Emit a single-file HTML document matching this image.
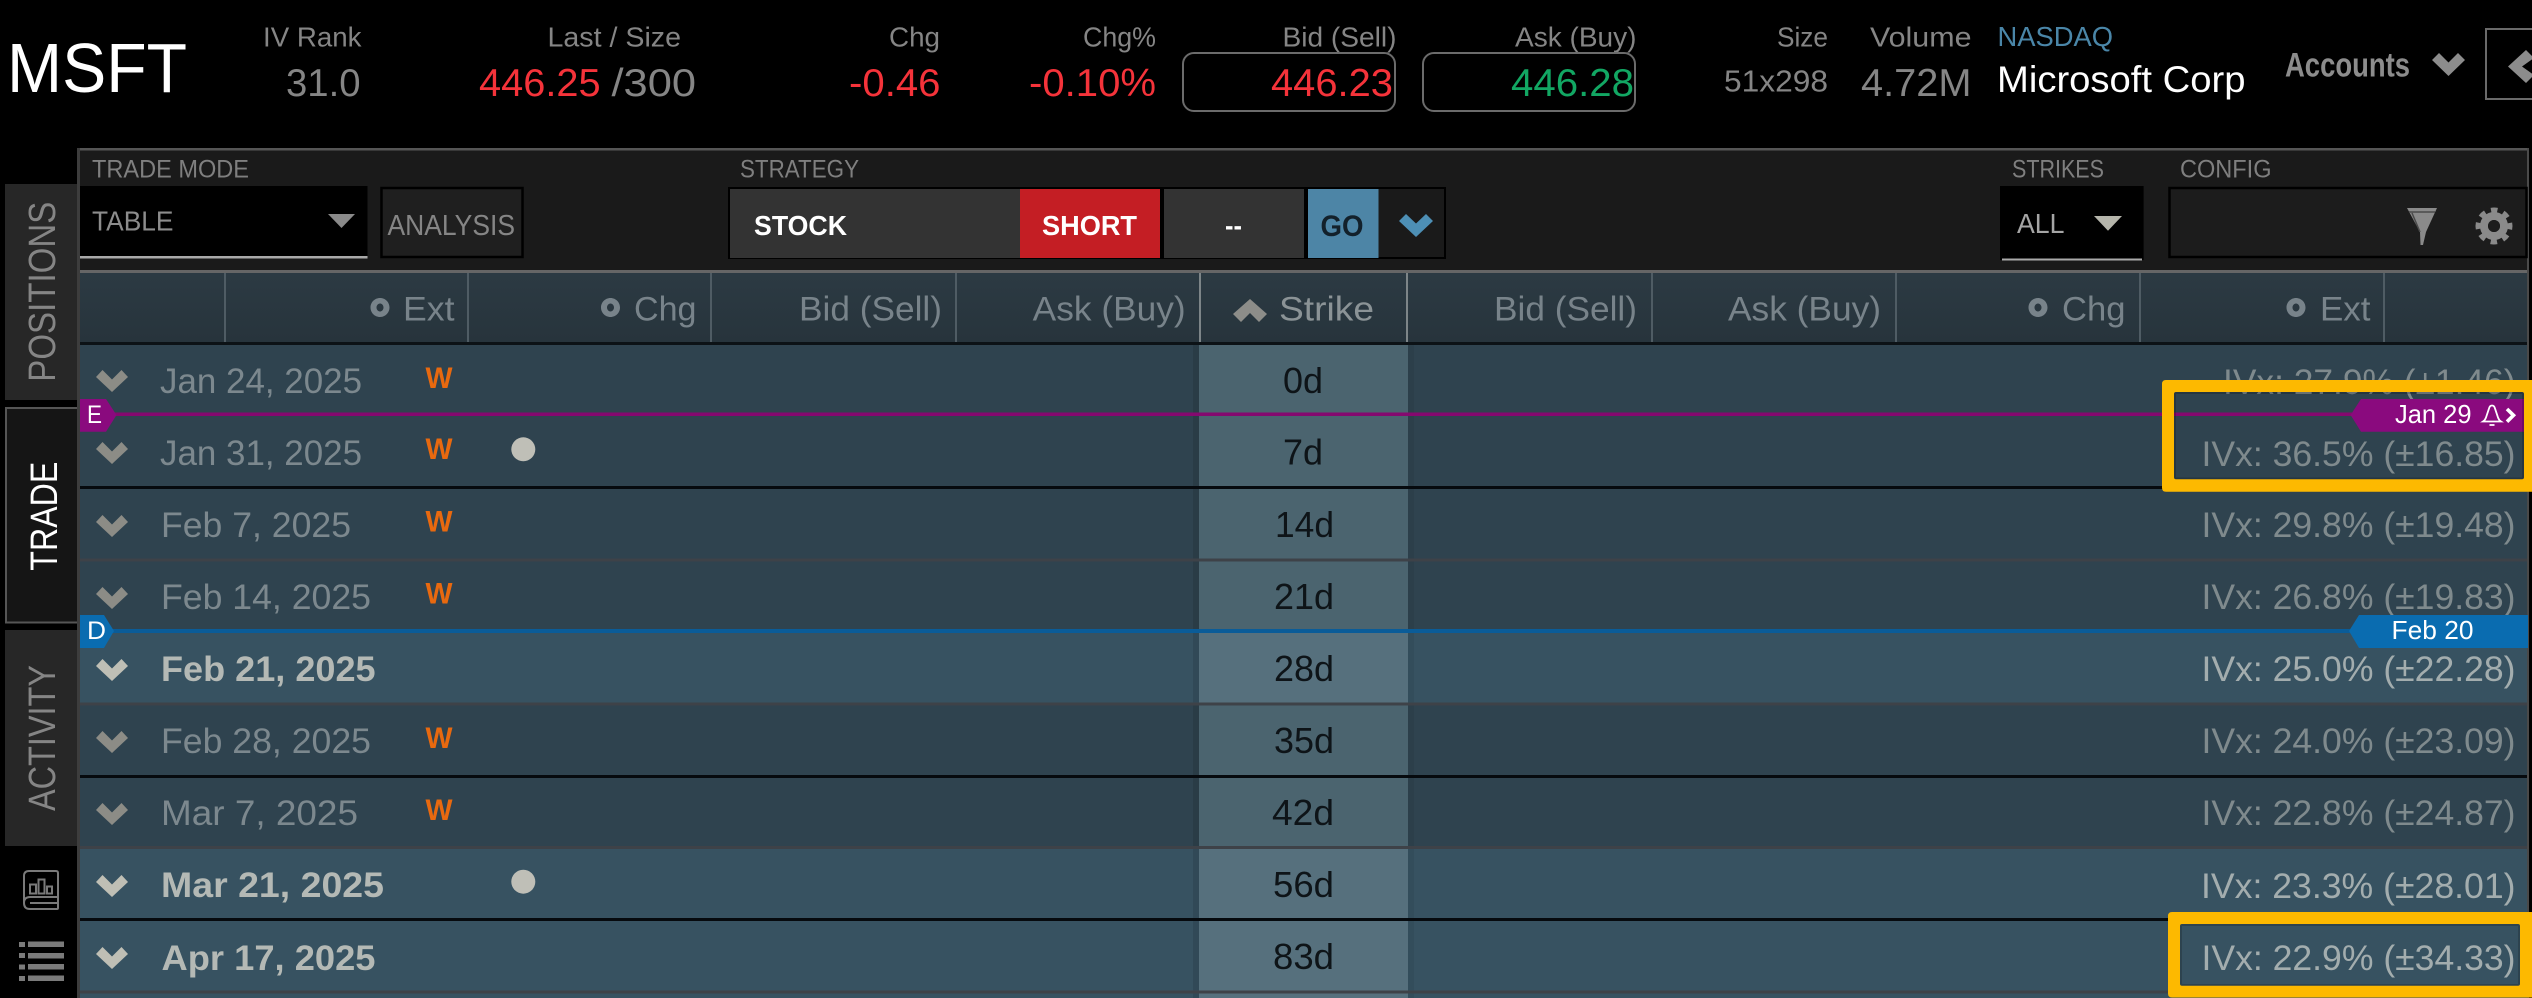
<!DOCTYPE html>
<html lang="en">
<head>
<meta charset="utf-8">
<title>MSFT Trade</title>
<style>
html,body{margin:0;padding:0;background:#000;width:2532px;height:998px;overflow:hidden}
svg{display:block}
text{font-family:"Liberation Sans",sans-serif}
.lb{font-size:28px;fill:#858585}
.val{font-size:39px;fill:#858585}
.red{font-size:39px;fill:#f5333a}
.tb{font-size:25px;fill:#7f7f7f}
.btn{font-size:28px;font-weight:bold;fill:#fff}
.hd{font-size:34px;fill:#78838a}
.dt{font-size:35px;fill:#7c888e}
.db{font-size:35px;font-weight:bold;fill:#b4b9b5}
.w{font-size:30px;font-weight:bold;fill:#e8690f}
.iv{font-size:35px;fill:#7f8a8d}
.ib{font-size:35px;fill:#a3adae}
.d{font-size:36px;fill:#0e1418}
.tag{font-size:26px;fill:#fff}
.tab{font-size:38px;fill:#858585}
</style>
</head>
<body>
<svg xmlns="http://www.w3.org/2000/svg" width="2532" height="998" viewBox="0 0 2532 998">
<defs>
<linearGradient id="hg" x1="0" y1="0" x2="0" y2="1"><stop offset="0" stop-color="#2c3a43"/><stop offset="1" stop-color="#27343c"/></linearGradient>
<path id="cv" d="M96 378 L102.500 371 L112 380.500 L121.500 371 L128 378 L112 393 Z"/>
<path id="ring" fill-rule="evenodd" d="M0 -9.500 C5.500 -9.500 9.500 -5 9.500 0 C9.500 5 5.500 9.500 0 9.500 C-5.500 9.500 -9.500 5 -9.500 0 C-9.500 -5 -5.500 -9.500 0 -9.500 Z M0 -4 C-2 -4 -3.500 -2 -3.500 0 C-3.500 2 -2 4 0 4 C2 4 3.500 2 3.500 0 C3.500 -2 2 -4 0 -4 Z"/>
</defs>
<rect width="2532" height="998" fill="#000"/>

<!-- top quote bar -->
<text x="7" y="92" font-size="70" fill="#fff" textLength="180" lengthAdjust="spacingAndGlyphs">MSFT</text>
<text class="lb" x="263" y="46.700" textLength="98.500" lengthAdjust="spacingAndGlyphs">IV Rank</text>
<text class="val" x="286" y="96" textLength="74.500" lengthAdjust="spacingAndGlyphs">31.0</text>
<text class="lb" x="547.500" y="46.700" textLength="133.500" lengthAdjust="spacingAndGlyphs">Last / Size</text>
<text class="red" x="479" y="96" textLength="121.600" lengthAdjust="spacingAndGlyphs">446.25</text>
<text class="val" x="611.500" y="96" textLength="84.500" lengthAdjust="spacingAndGlyphs">/300</text>
<text class="lb" x="889" y="46.700" textLength="51" lengthAdjust="spacingAndGlyphs">Chg</text>
<text class="red" x="849" y="96" textLength="91.500" lengthAdjust="spacingAndGlyphs">-0.46</text>
<text class="lb" x="1083" y="46.700" textLength="73" lengthAdjust="spacingAndGlyphs">Chg%</text>
<text class="red" x="1029" y="96" textLength="127" lengthAdjust="spacingAndGlyphs">-0.10%</text>
<text class="lb" x="1282.500" y="46.700" textLength="114" lengthAdjust="spacingAndGlyphs">Bid (Sell)</text>
<rect x="1183" y="53" width="212" height="58" rx="11" fill="#000" stroke="#6b6b6b" stroke-width="2"/>
<text class="red" x="1271" y="96" textLength="122" lengthAdjust="spacingAndGlyphs">446.23</text>
<text class="lb" x="1515" y="46.700" textLength="121.500" lengthAdjust="spacingAndGlyphs">Ask (Buy)</text>
<rect x="1423" y="53" width="212" height="58" rx="11" fill="#000" stroke="#6b6b6b" stroke-width="2"/>
<text x="1511" y="96" font-size="39" fill="#12a763" textLength="123" lengthAdjust="spacingAndGlyphs">446.28</text>
<text class="lb" x="1777" y="46.700" textLength="51" lengthAdjust="spacingAndGlyphs">Size</text>
<text x="1724" y="91.700" font-size="31" fill="#858585" textLength="104" lengthAdjust="spacingAndGlyphs">51x298</text>
<text class="lb" x="1870" y="46.700" textLength="101.500" lengthAdjust="spacingAndGlyphs">Volume</text>
<text class="val" x="1861" y="96" textLength="110.500" lengthAdjust="spacingAndGlyphs">4.72M</text>
<text x="1997.500" y="46" font-size="28" fill="#4a86a8" textLength="115.500" lengthAdjust="spacingAndGlyphs">NASDAQ</text>
<text x="1997" y="92" font-size="37" fill="#fff" textLength="248.500" lengthAdjust="spacingAndGlyphs">Microsoft Corp</text>
<text x="2285" y="76.700" font-size="34" font-weight="bold" fill="#8c8c8c" textLength="125" lengthAdjust="spacingAndGlyphs">Accounts</text>
<path d="M2432 60 L2439 53 L2448.500 62.500 L2458 53 L2465 60 L2448.500 76 Z" fill="#8c8c8c"/>
<rect x="2486" y="29" width="60" height="70" fill="none" stroke="#6a6a6a" stroke-width="2"/>
<path d="M2508 66.500 L2526 50 L2534 58 L2522 66.500 L2534 75 L2526 83 Z" fill="#8c8c8c"/>

<!-- panel + toolbar -->
<rect x="77" y="148" width="2452" height="850" fill="#1a1a1a"/>
<rect x="77" y="148" width="2452" height="2.500" fill="#555"/>
<rect x="77" y="148" width="3" height="850" fill="#3d3d3d"/>
<rect x="2527" y="148" width="2" height="850" fill="#4a4a4a"/>

<text class="tb" x="92" y="177.700" textLength="157" lengthAdjust="spacingAndGlyphs">TRADE MODE</text>
<rect x="80" y="186" width="287.500" height="72" fill="#000"/>
<rect x="80" y="256" width="287.500" height="2.500" fill="#a9a9a9"/>
<text x="92" y="230.700" font-size="28" fill="#8c8c8c" textLength="81.500" lengthAdjust="spacingAndGlyphs">TABLE</text>
<path d="M328 214 H355 L341.500 228 Z" fill="#8a8a8a"/>
<rect x="381.500" y="188" width="141" height="69" fill="#1f1f1f" stroke="#000" stroke-width="2.500"/>
<text x="387.500" y="235" font-size="29" fill="#858585" textLength="127.500" lengthAdjust="spacingAndGlyphs">ANALYSIS</text>

<text class="tb" x="740" y="177.700" textLength="119" lengthAdjust="spacingAndGlyphs">STRATEGY</text>
<rect x="728" y="187" width="718" height="72" fill="#000"/>
<rect x="730" y="189" width="290" height="69" fill="#333"/>
<text class="btn" x="754" y="235" textLength="93" lengthAdjust="spacingAndGlyphs">STOCK</text>
<rect x="1020" y="189" width="140" height="69" fill="#c41e24"/>
<text class="btn" x="1042" y="235" textLength="95" lengthAdjust="spacingAndGlyphs">SHORT</text>
<rect x="1164" y="189" width="140" height="69" fill="#333"/>
<text class="btn" x="1225" y="235" textLength="17" lengthAdjust="spacingAndGlyphs">--</text>
<rect x="1308" y="189" width="70.500" height="69" fill="#4d85a6"/>
<text class="btn" style="fill:#13212b;font-size:30px" x="1320.500" y="236" textLength="43" lengthAdjust="spacingAndGlyphs">GO</text>
<rect x="1378.500" y="189" width="65.500" height="68" fill="#1a1a1a"/>
<path d="M1399 221 L1406 214 L1416 223.500 L1426 214 L1433 221 L1416 237 Z" fill="#4d8fb5"/>

<text class="tb" x="2012" y="177.700" textLength="92" lengthAdjust="spacingAndGlyphs">STRIKES</text>
<rect x="2000" y="186" width="143.600" height="74" fill="#000"/>
<rect x="2002" y="258.500" width="140" height="2" fill="#a9a9a9"/>
<text x="2017" y="233" font-size="28" fill="#a5a5a5" textLength="47.500" lengthAdjust="spacingAndGlyphs">ALL</text>
<path d="M2094 216 H2122 L2108 230.700 Z" fill="#b5b5ab"/>
<text class="tb" x="2180" y="177.700" textLength="91.500" lengthAdjust="spacingAndGlyphs">CONFIG</text>
<rect x="2169.500" y="188" width="357" height="69" fill="#1c1c1c" stroke="#000" stroke-width="2.500"/>
<path d="M2407 208 H2437 L2426 232 L2423 245 H2420.500 L2420 232 Z" fill="#8a8a8a"/>
<path d="M2409 212 H2435 M2412 213 L2420 232" stroke="#4a4a4a" stroke-width="1.500" fill="none"/>
<circle cx="2494" cy="226" r="15.500" fill="none" stroke="#8a8a8a" stroke-width="6" stroke-dasharray="6.200 5.970" transform="rotate(-11 2494 226)"/>
<circle cx="2494" cy="226" r="10" fill="none" stroke="#8a8a8a" stroke-width="8"/>
<circle cx="2494" cy="226" r="6" fill="#1c1c1c"/>

<!-- column header -->
<rect x="80" y="270" width="2447" height="3" fill="#666"/>
<rect x="80" y="273" width="2447" height="69" fill="url(#hg)"/>
<rect x="80" y="342" width="2447" height="3" fill="#0c1216"/>
<g fill="#4f5c64">
<rect x="224" y="273" width="2" height="69"/><rect x="467" y="273" width="2" height="69"/><rect x="710" y="273" width="2" height="69"/><rect x="955" y="273" width="2" height="69"/><rect x="1651" y="273" width="2" height="69"/><rect x="1895" y="273" width="2" height="69"/><rect x="2139" y="273" width="2" height="69"/><rect x="2383" y="273" width="2" height="69"/>
</g>
<rect x="1199" y="273" width="2" height="69" fill="#7d8588"/>
<rect x="1406" y="273" width="2" height="69" fill="#7d8588"/>
<g fill="#78838a">
<use href="#ring" x="380" y="307.500"/>
<use href="#ring" x="610.500" y="307.500"/>
<use href="#ring" x="2038" y="307.500"/>
<use href="#ring" x="2296" y="307.500"/>
</g>
<text class="hd" x="403" y="320.700" textLength="51.500" lengthAdjust="spacingAndGlyphs">Ext</text>
<text class="hd" x="634" y="320.700" textLength="62.500" lengthAdjust="spacingAndGlyphs">Chg</text>
<text class="hd" x="799" y="320.700" textLength="143" lengthAdjust="spacingAndGlyphs">Bid (Sell)</text>
<text class="hd" x="1032.700" y="320.700" textLength="153" lengthAdjust="spacingAndGlyphs">Ask (Buy)</text>
<path d="M1233 314 L1250 299 L1267 314 L1259 322 L1250 313 L1241 322 Z" fill="#8d8d89"/>
<text class="hd" style="fill:#8b9396" x="1279" y="320.700" textLength="95" lengthAdjust="spacingAndGlyphs">Strike</text>
<text class="hd" x="1494" y="320.700" textLength="143" lengthAdjust="spacingAndGlyphs">Bid (Sell)</text>
<text class="hd" x="1728" y="320.700" textLength="153" lengthAdjust="spacingAndGlyphs">Ask (Buy)</text>
<text class="hd" x="2062" y="320.700" textLength="63.500" lengthAdjust="spacingAndGlyphs">Chg</text>
<text class="hd" x="2320" y="320.700" textLength="50.500" lengthAdjust="spacingAndGlyphs">Ext</text>

<!-- rows -->
<rect x="80" y="345" width="2447" height="287" fill="#2f434f"/>
<rect x="80" y="632" width="2447" height="72" fill="#375261"/>
<rect x="80" y="704" width="2447" height="144" fill="#2f434f"/>
<rect x="80" y="848" width="2447" height="150" fill="#375261"/>
<rect x="1199" y="345" width="209" height="287" fill="#4b646f"/>
<rect x="1199" y="632" width="209" height="72" fill="#56707d"/>
<rect x="1199" y="704" width="209" height="144" fill="#4b646f"/>
<rect x="1199" y="848" width="209" height="150" fill="#56707d"/>
<rect x="1193" y="345" width="6" height="653" fill="#000" opacity=".1"/>
<rect x="1408" y="345" width="6" height="653" fill="#000" opacity=".06"/>
<g fill="#060a0e">
<rect x="80" y="486" width="2447" height="3"/><rect x="80" y="775" width="2447" height="3"/><rect x="80" y="918" width="2447" height="3"/>
</g>
<g fill="#3e4248">
<rect x="80" y="558.500" width="2447" height="3"/><rect x="80" y="702.500" width="2447" height="3"/><rect x="80" y="846" width="2447" height="3"/><rect x="80" y="990.500" width="2447" height="3"/>
</g>

<g fill="#8c8c86">
<use href="#cv" y="-1"/><use href="#cv" y="71"/><use href="#cv" y="144"/><use href="#cv" y="216"/><use href="#cv" y="360"/><use href="#cv" y="432"/>
</g>
<g fill="#bfbfb5">
<use href="#cv" y="288"/><use href="#cv" y="504"/><use href="#cv" y="576"/>
</g>

<text class="dt" x="160" y="393" textLength="202" lengthAdjust="spacingAndGlyphs">Jan 24, 2025</text>
<text class="dt" x="160" y="465" textLength="202" lengthAdjust="spacingAndGlyphs">Jan 31, 2025</text>
<text class="dt" x="161" y="537" textLength="190" lengthAdjust="spacingAndGlyphs">Feb 7, 2025</text>
<text class="dt" x="161" y="609" textLength="210" lengthAdjust="spacingAndGlyphs">Feb 14, 2025</text>
<text class="db" x="161" y="681" textLength="214.600" lengthAdjust="spacingAndGlyphs">Feb 21, 2025</text>
<text class="dt" x="161" y="753" textLength="210" lengthAdjust="spacingAndGlyphs">Feb 28, 2025</text>
<text class="dt" x="161" y="825" textLength="197" lengthAdjust="spacingAndGlyphs">Mar 7, 2025</text>
<text class="db" x="161" y="897" textLength="223" lengthAdjust="spacingAndGlyphs">Mar 21, 2025</text>
<text class="db" x="161.500" y="970" textLength="214" lengthAdjust="spacingAndGlyphs">Apr 17, 2025</text>

<text class="w" x="425.500" y="388" textLength="27" lengthAdjust="spacingAndGlyphs">W</text>
<text class="w" x="425.500" y="459" textLength="27" lengthAdjust="spacingAndGlyphs">W</text>
<text class="w" x="425.500" y="531.500" textLength="27" lengthAdjust="spacingAndGlyphs">W</text>
<text class="w" x="425.500" y="603.500" textLength="27" lengthAdjust="spacingAndGlyphs">W</text>
<text class="w" x="425.500" y="748" textLength="27" lengthAdjust="spacingAndGlyphs">W</text>
<text class="w" x="425.500" y="820" textLength="27" lengthAdjust="spacingAndGlyphs">W</text>
<circle cx="523.300" cy="449.300" r="12" fill="#bfbfb7"/>
<circle cx="523.300" cy="881.700" r="12" fill="#bfbfb7"/>

<text class="d" x="1283" y="393" textLength="40" lengthAdjust="spacingAndGlyphs">0d</text>
<text class="d" x="1283" y="464.500" textLength="40" lengthAdjust="spacingAndGlyphs">7d</text>
<text class="d" x="1275" y="537" textLength="59" lengthAdjust="spacingAndGlyphs">14d</text>
<text class="d" x="1274" y="609" textLength="60" lengthAdjust="spacingAndGlyphs">21d</text>
<text class="d" x="1274" y="681" textLength="60" lengthAdjust="spacingAndGlyphs">28d</text>
<text class="d" x="1274" y="753" textLength="60" lengthAdjust="spacingAndGlyphs">35d</text>
<text class="d" x="1272" y="825" textLength="62" lengthAdjust="spacingAndGlyphs">42d</text>
<text class="d" x="1273" y="897" textLength="61" lengthAdjust="spacingAndGlyphs">56d</text>
<text class="d" x="1273" y="969" textLength="61" lengthAdjust="spacingAndGlyphs">83d</text>

<text class="iv" x="2223" y="394" textLength="292.500" lengthAdjust="spacingAndGlyphs">IVx: 27.9% (±1.46)</text>
<text class="iv" x="2201.500" y="466" textLength="314" lengthAdjust="spacingAndGlyphs">IVx: 36.5% (±16.85)</text>
<text class="iv" x="2201.500" y="537" textLength="314" lengthAdjust="spacingAndGlyphs">IVx: 29.8% (±19.48)</text>
<text class="iv" x="2201.500" y="609" textLength="314" lengthAdjust="spacingAndGlyphs">IVx: 26.8% (±19.83)</text>
<text class="ib" x="2201.500" y="681" textLength="314" lengthAdjust="spacingAndGlyphs">IVx: 25.0% (±22.28)</text>
<text class="iv" x="2201.500" y="753" textLength="314" lengthAdjust="spacingAndGlyphs">IVx: 24.0% (±23.09)</text>
<text class="iv" x="2201.500" y="825" textLength="314" lengthAdjust="spacingAndGlyphs">IVx: 22.8% (±24.87)</text>
<text class="ib" x="2201" y="898" textLength="314.500" lengthAdjust="spacingAndGlyphs">IVx: 23.3% (±28.01)</text>
<text class="ib" x="2201.500" y="970" textLength="314" lengthAdjust="spacingAndGlyphs">IVx: 22.9% (±34.33)</text>

<!-- event lines -->
<rect x="112" y="412.500" width="2240" height="3.500" fill="#85096f"/>
<path d="M80 399 H106 L116.500 415 L106 431.700 H80 Z" fill="#8a0a7e"/>
<text x="87" y="423" font-size="25" fill="#fff" textLength="15" lengthAdjust="spacingAndGlyphs">E</text>
<path d="M2350.600 415 L2361 399 H2524 V431.700 H2361 Z" fill="#8a0a7e"/>
<text class="tag" x="2395" y="423" textLength="76.500" lengthAdjust="spacingAndGlyphs">Jan 29</text>
<path d="M2492 405.500 c-1.500 0 -2.500 1 -3 3 l-3 9 c-0.500 1.500 -1.500 3 -3 4 h18 c-1.500 -1 -2.500 -2.500 -3 -4 l-3 -9 c-0.500 -2 -1.500 -3 -3 -3 z M2489.500 425 h5" fill="none" stroke="#fff" stroke-width="1.800"/>
<path d="M2507 409 L2513.500 415.300 L2507 421.700" fill="none" stroke="#fff" stroke-width="3.600"/>

<rect x="110" y="629" width="2240" height="4" fill="#0a5c98"/>
<path d="M80 615 H104 L114 631 L104 648 H80 Z" fill="#0a6cb0"/>
<text x="87" y="639" font-size="25" fill="#fff" textLength="19" lengthAdjust="spacingAndGlyphs">D</text>
<path d="M2349 631 L2359 615 H2528 V648 H2359 Z" fill="#0a6cb0"/>
<text class="tag" x="2391.500" y="639" textLength="82" lengthAdjust="spacingAndGlyphs">Feb 20</text>

<!-- highlight boxes -->
<rect x="2175" y="393" width="348" height="85.500" fill="none" stroke="#000" stroke-opacity=".18" stroke-width="2"/>
<rect x="2181" y="925" width="338" height="60" fill="none" stroke="#000" stroke-opacity=".18" stroke-width="2"/>
<path fill-rule="evenodd" fill="#fdb900" d="M2166 380 H2536 V491.700 H2166 Q2162 491.700 2162 487.700 V384 Q2162 380 2166 380 Z M2176 392 Q2174 392 2174 394 V477.300 Q2174 479.300 2176 479.300 H2522 Q2524 479.300 2524 477.300 V394 Q2524 392 2522 392 Z"/>
<path fill-rule="evenodd" fill="#fdb900" d="M2172 912 H2536 V997.500 H2172 Q2168 997.500 2168 993.500 V916 Q2168 912 2172 912 Z M2182 924 Q2180 924 2180 926 V983.700 Q2180 985.700 2182 985.700 H2518 Q2520 985.700 2520 983.700 V926 Q2520 924 2518 924 Z"/>

<!-- sidebar -->
<rect x="5" y="184" width="72" height="216" fill="#272727"/>
<rect x="5" y="630" width="72" height="216" fill="#272727"/>
<rect x="5" y="408" width="72" height="215" fill="#151515"/>
<path d="M77 408 H6 V622.500 H77" fill="none" stroke="#555" stroke-width="2"/>
<text class="tab" transform="translate(55,381.700) rotate(-90)" textLength="180" lengthAdjust="spacingAndGlyphs">POSITIONS</text>
<text class="tab" style="fill:#fff" transform="translate(57,570.700) rotate(-90)" textLength="109" lengthAdjust="spacingAndGlyphs">TRADE</text>
<text class="tab" transform="translate(55,811) rotate(-90)" textLength="146" lengthAdjust="spacingAndGlyphs">ACTIVITY</text>

<g fill="none" stroke="#7a7a7a" stroke-width="2">
<path d="M29 871 H56 Q58 871 58 873 V908 Q58 909 57 909 H30 Q24 909 24 903 V876 Q24 871 29 871 Z"/>
<path d="M24 903 Q24 897 30 897 H58 M30 903 H58"/>
<rect x="30" y="884.500" width="6" height="9"/>
<rect x="38.500" y="879.500" width="6" height="14"/>
<rect x="47" y="886.500" width="5" height="7"/>
</g>
<g fill="#7a7a7a">
<rect x="19" y="942" width="6" height="5"/><rect x="28" y="941.500" width="36" height="5.500"/>
<rect x="19" y="953" width="6" height="5"/><rect x="28" y="953" width="36" height="5.500"/>
<rect x="19" y="964.500" width="6" height="5"/><rect x="28" y="964" width="36" height="5.500"/>
<rect x="19" y="976" width="6" height="5"/><rect x="28" y="975.500" width="36" height="5.500"/>
</g>
</svg>
</body>
</html>
